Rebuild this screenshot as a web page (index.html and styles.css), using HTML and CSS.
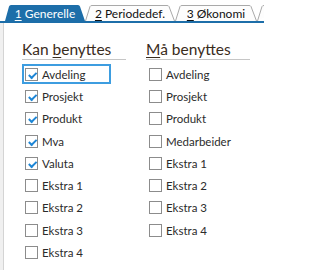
FILE: index.html
```html
<!DOCTYPE html>
<html>
<head>
<meta charset="utf-8">
<link rel="stylesheet" href="styles.css">
</head>
<body>
<div class="tabstrip">
  <div class="tab tab1 active">
    <svg class="tabshape" width="80" height="16" viewBox="0 0 80 16"><path d="M0 16 L4 1.5 Q4.5 0 6 0 L73 0 Q74.5 0 75 1.5 L80 16 Z" fill="#1d6ea9"/></svg>
    <span class="label"><u>1</u> Generelle</span>
  </div>
  <div class="tab tab2">
    <svg class="tabshape" width="90" height="16" viewBox="0 0 90 16"><path d="M0.5 16 L5 1.5 Q5.5 0.5 7 0.5 L82 0.5 Q83.5 0.5 84 1.5 L89.5 16" fill="#fdfdfd" stroke="#a9a9a9" stroke-width="1"/></svg>
    <span class="label"><u>2</u> Periodedef.</span>
  </div>
  <div class="tab tab3">
    <svg class="tabshape" width="82" height="16" viewBox="0 0 82 16"><path d="M0.5 16 L5 1.5 Q5.5 0.5 7 0.5 L74 0.5 Q75.5 0.5 76 1.5 L81.5 16" fill="#fdfdfd" stroke="#a9a9a9" stroke-width="1"/></svg>
    <span class="label"><u>3</u> Økonomi</span>
  </div>
  <div class="tab tab4">
    <svg class="tabshape" width="30" height="16" viewBox="0 0 30 16"><path d="M0.5 16 L5 1.5 Q5.5 0.5 7 0.5 L30 0.5" fill="#fdfdfd" stroke="#a9a9a9" stroke-width="1"/></svg>
  </div>
</div>
<div class="frame">
  <div class="panel">
    <div class="col">
      <div class="heading">Kan <u>b</u>enyttes</div>
      <div class="row focus"><span class="cb on"></span><span class="txt">Avdeling</span></div>
      <div class="row"><span class="cb on"></span><span class="txt">Prosjekt</span></div>
      <div class="row"><span class="cb on"></span><span class="txt">Produkt</span></div>
      <div class="row"><span class="cb on"></span><span class="txt">Mva</span></div>
      <div class="row"><span class="cb on"></span><span class="txt">Valuta</span></div>
      <div class="row"><span class="cb"></span><span class="txt">Ekstra 1</span></div>
      <div class="row"><span class="cb"></span><span class="txt">Ekstra 2</span></div>
      <div class="row"><span class="cb"></span><span class="txt">Ekstra 3</span></div>
      <div class="row"><span class="cb"></span><span class="txt">Ekstra 4</span></div>
    </div>
    <div class="col">
      <div class="heading"><u>M</u>å benyttes</div>
      <div class="row"><span class="cb"></span><span class="txt">Avdeling</span></div>
      <div class="row"><span class="cb"></span><span class="txt">Prosjekt</span></div>
      <div class="row"><span class="cb"></span><span class="txt">Produkt</span></div>
      <div class="row"><span class="cb"></span><span class="txt">Medarbeider</span></div>
      <div class="row"><span class="cb"></span><span class="txt">Ekstra 1</span></div>
      <div class="row"><span class="cb"></span><span class="txt">Ekstra 2</span></div>
      <div class="row"><span class="cb"></span><span class="txt">Ekstra 3</span></div>
      <div class="row"><span class="cb"></span><span class="txt">Ekstra 4</span></div>
    </div>
  </div>
</div>
</body>
</html>
```
FILE: styles.css
```css
html, body {
  margin: 0;
  padding: 0;
  background: #ffffff;
  font-family: Lato, "Open Sans", sans-serif;
  width: 264px;
  height: 270px;
  overflow: hidden;
}
.tabstrip {
  display: flex;
  height: 16px;
  padding-top: 5px;
  padding-left: 5px;
  border-bottom: 2px solid #1d6ea9;
  overflow: hidden;
}
.tab {
  position: relative;
  height: 16px;
  flex: none;
  display: flex;
  align-items: center;
  justify-content: center;
  font-size: 12px;
  color: #111;
}
.tab1 { width: 80px; }
.tab2 { width: 90px; }
.tab3 { width: 82px; }
.tab4 { width: 30px; }
.tabshape {
  position: absolute;
  left: 0;
  top: 0;
}
.label {
  position: relative;
  line-height: 16px;
  padding-top: 1px;
  white-space: nowrap;
}
.tab1 .label { color: #ffffff; }
.tab u, .heading u { text-underline-offset: 2px; }
.frame {
  background: #f0f0f0;
  padding-left: 3px;
  height: 250px;
}
.panel {
  background: #ffffff;
  border-left: 1px solid #d4d4d4;
  height: 100%;
  display: flex;
  gap: 20px;
  padding-left: 18px;
  padding-top: 17px;
  box-sizing: border-box;
}
.col {
  width: 104px;
  display: flex;
  flex-direction: column;
}
.heading {
  font-size: 15.5px;
  line-height: 19px;
  color: #3a2c1c;
  border-bottom: 1px solid #c6c6c6;
  margin-bottom: 3px;
}
.row {
  height: 20.3px;
  margin: 1px 0;
  box-sizing: border-box;
  border: 2px solid transparent;
  display: flex;
  align-items: center;
  padding-left: 1px;
  width: 89px;
}
.row.focus { border-color: #3d9de0; }
.cb {
  width: 13px;
  height: 13px;
  box-sizing: border-box;
  border: 1px solid #8c8c8c;
  background: #fff;
  flex: none;
  position: relative;
}
.cb.on::after {
  content: "";
  position: absolute;
  left: 2px;
  top: 1px;
  width: 6px;
  height: 3px;
  border-left: 2px solid #1e86d6;
  border-bottom: 2px solid #1e86d6;
  transform: rotate(-45deg) translate(-1px, 2px);
}
.txt {
  margin-left: 4px;
  font-size: 11.5px;
  color: #2b2b2b;
  white-space: nowrap;
}
```
